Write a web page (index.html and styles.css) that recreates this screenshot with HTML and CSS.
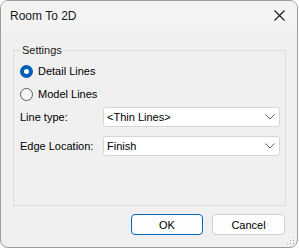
FILE: index.html
```html
<!DOCTYPE html>
<html>
<head>
<meta charset="utf-8">
<link rel="stylesheet" href="styles.css">
</head>
<body>
<div class="window">
  <div class="titlebar">
    <span class="title">Room To 2D</span>
    <span class="close">
      <svg width="11" height="11" viewBox="0 0 11 11"><path d="M0.5 0.5 L10.5 10.5 M10.5 0.5 L0.5 10.5" stroke="#1a1a1a" stroke-width="1.1" fill="none"/></svg>
    </span>
  </div>
  <div class="content">
    <fieldset class="group">
      <legend class="legend">Settings</legend>
      <div class="radio-row">
        <span class="radio checked"></span><span class="label">Detail Lines</span>
      </div>
      <div class="radio-row">
        <span class="radio"></span><span class="label">Model Lines</span>
      </div>
      <div class="field-row first">
        <span class="field-label">Line type:</span>
        <div class="combo"><span class="combo-text">&lt;Thin Lines&gt;</span>
          <svg class="chev" width="10" height="6" viewBox="0 0 10 6"><path d="M0.5 0.5 L5 5 L9.5 0.5" stroke="#5f5f5f" stroke-width="1" fill="none"/></svg>
        </div>
      </div>
      <div class="field-row">
        <span class="field-label">Edge Location:</span>
        <div class="combo"><span class="combo-text">Finish</span>
          <svg class="chev" width="10" height="6" viewBox="0 0 10 6"><path d="M0.5 0.5 L5 5 L9.5 0.5" stroke="#5f5f5f" stroke-width="1" fill="none"/></svg>
        </div>
      </div>
    </fieldset>
    <div class="buttons">
      <button class="btn default">OK</button>
      <button class="btn">Cancel</button>
    </div>
  </div>
  <svg class="grip" width="8" height="8" viewBox="0 0 8 8">
    <rect x="6" y="0" width="1" height="1" fill="#a8a8a8"/>
    <rect x="3" y="3" width="1" height="1" fill="#a8a8a8"/>
    <rect x="6" y="3" width="1" height="1" fill="#a8a8a8"/>
    <rect x="0" y="6" width="1" height="1" fill="#a8a8a8"/>
    <rect x="3" y="6" width="1" height="1" fill="#a8a8a8"/>
    <rect x="6" y="6" width="1" height="1" fill="#a8a8a8"/>
  </svg>
</div>
</body>
</html>
```
FILE: styles.css
```css
html, body {
  margin: 0;
  padding: 0;
  background: #ffffff;
}
body {
  font-family: "Liberation Sans", Arial, sans-serif;
  font-size: 11px;
  color: #000;
}
.window {
  position: relative;
  width: 298px;
  height: 248px;
  box-sizing: border-box;
  border: 1px solid #9c9c9c;
  border-radius: 8px;
  background: #f0f0f0;
  overflow: hidden;
}
.titlebar {
  height: 30px;
  background: #f3f3f3;
  display: flex;
  align-items: center;
  justify-content: space-between;
  padding: 0 10px 0 9px;
}
.title {
  font-size: 12px;
  color: #1a1a1a;
  line-height: 14px;
}
.close {
  display: flex;
  width: 11px;
  height: 11px;
  margin-right: 2px;
  margin-top: -1px;
}
.content {
  display: flex;
  flex-direction: column;
}
.group {
  margin: 13px 11px 0 12px;
  border: 1px solid #dcdcdc;
  padding: 4px 0 49px 6px;
  min-width: 0;
}
.legend {
  padding: 0 2px;
  line-height: 12px;
  color: #1a1a1a;
}
.radio-row {
  height: 23px;
  display: flex;
  align-items: center;
}
.radio {
  width: 13px;
  height: 13px;
  box-sizing: border-box;
  border-radius: 50%;
  border: 1px solid #5c5c5c;
  background: #f7f7f7;
  margin-right: 5px;
  flex: none;
}
.radio.checked {
  border: 4px solid #005fb8;
  background: #ffffff;
}
.label {
  line-height: 13px;
}
.field-row {
  display: flex;
  align-items: center;
  margin-top: 9px;
}
.field-row.first {
  margin-top: 1px;
}
.field-label {
  width: 83px;
  flex: none;
}
.field-row .field-label {
  padding-left: 0;
}
.combo {
  width: 177px;
  height: 20px;
  box-sizing: border-box;
  background: #ffffff;
  border: 1px solid #d6d6d6;
  border-radius: 3px;
  display: flex;
  align-items: center;
  justify-content: space-between;
  padding: 0 4px 0 3px;
}
.combo-text {
  color: #000;
}
.chev {
  display: block;
  margin-right: 0;
}
.buttons {
  display: flex;
  justify-content: flex-end;
  gap: 9px;
  margin: 8px 12px 0 0;
}
.btn {
  width: 72px;
  height: 21px;
  box-sizing: border-box;
  font-family: "Liberation Sans", Arial, sans-serif;
  font-size: 11px;
  color: #000;
  background: #fdfdfd;
  border: 1px solid #d0d0d0;
  border-radius: 4px;
  padding: 0;
}
.btn.default {
  border-color: #0067c0;
}
.btn + .btn {
  width: 73px;
}
.grip {
  position: absolute;
  right: 2px;
  bottom: 2px;
}
```
